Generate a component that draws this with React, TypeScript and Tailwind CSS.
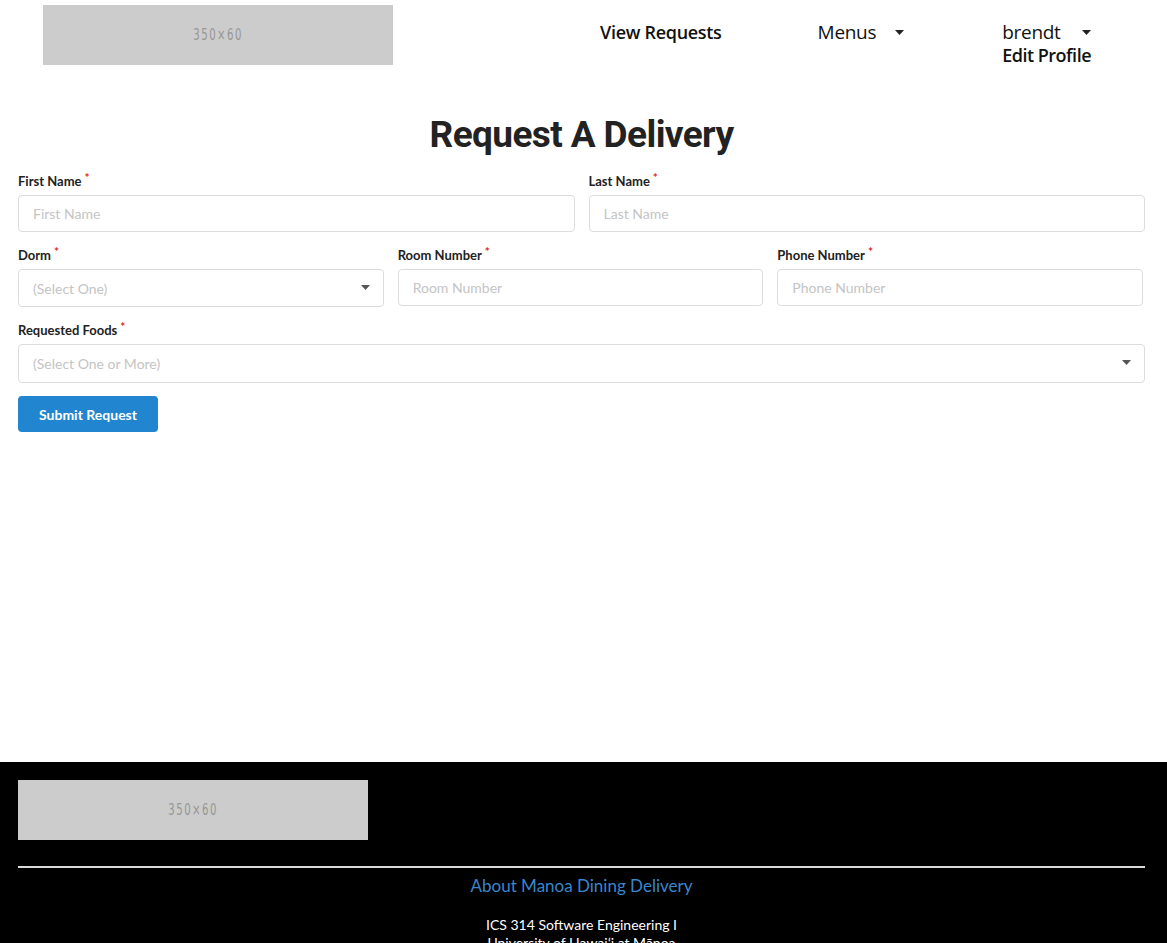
import React from "react";

const Caret = ({ className = "" }: { className?: string }) => (
    <svg width="9" height="5" viewBox="0 0 9 5" className={className}>
        <path d="M0 0 L9 0 L4.5 5 Z" fill="currentColor" />
    </svg>
);

const Placeholder = ({ className = "" }: { className?: string }) => (
    <div className={`bg-[#cccccc] w-[350px] h-[60px] flex items-center justify-center ${className}`}>
        <span className="text-[#969696] text-[15px] tracking-[2px] [font-family:'DejaVu_Sans_Condensed','Liberation_Sans_Narrow',sans-serif] scale-x-75">
            350×60
        </span>
    </div>
);

const Label = ({ children }: { children: React.ReactNode }) => (
    <label className="block text-[13px] font-bold text-[#222] leading-none mb-[7px]">
        {children}
        <span className="text-[#db2828] text-[12px] relative -top-[4px] ml-[3px]">*</span>
    </label>
);

const Input = ({ placeholder }: { placeholder: string }) => (
    <input
        placeholder={placeholder}
        className="w-full h-[37px] px-[14px] border border-[#dcdcdd] rounded-[4px] text-[14px] text-[#222] placeholder:text-[#c4c4c4] outline-none"
    />
);

const Select = ({ placeholder, tall = false }: { placeholder: string; tall?: boolean }) => (
    <div className={`w-full ${tall ? "h-[39px]" : "h-[38px]"} px-[14px] border border-[#dcdcdd] rounded-[4px] flex items-center justify-between`}>
        <span className="text-[14px] text-[#c4c4c4]">{placeholder}</span>
        <Caret className="text-[#555] -mr-[1px] -mt-[2px]" />
    </div>
);

const Header: React.FC = () => (
    <header className="h-[70px] flex items-start pt-[5px] pl-[43px] [font-family:'Open_Sans',sans-serif] text-[#111]">
        <Placeholder />
        <nav className="flex items-start ml-[207px] pt-[16px] text-[19px] leading-[23px]">
            <a className="font-semibold text-[18px] tracking-[-0.3px]">View Requests</a>
            <div className="flex items-center ml-[96px]">
                <span className="tracking-[-0.3px]">Menus</span>
                <Caret className="ml-[19px] text-[#222]" />
            </div>
            <div className="ml-[98px] flex flex-col">
                <div className="flex items-center">
                    <span className="tracking-[-0.3px]">brendt</span>
                    <Caret className="ml-[21px] text-[#222]" />
                </div>
                <a className="font-semibold text-[18px] tracking-[-0.5px]">Edit Profile</a>
            </div>
        </nav>
    </header>
);

export default function App() {
    return (
        <div className="min-h-screen bg-white [font-family:Lato,sans-serif]">
            <Header />
            <main className="h-[692px] px-[18px] pr-[22px] pt-[46px]">
                <h1 className="text-center text-[37px] font-bold text-[#222] leading-none mb-[22px] tracking-[-0.6px] [font-family:'Roboto',sans-serif]">
                    Request A Delivery
                </h1>
                <form className="flex flex-col">
                    <div className="grid grid-cols-2 gap-[14px]">
                        <div>
                            <Label>First Name</Label>
                            <Input placeholder="First Name" />
                        </div>
                        <div>
                            <Label>Last Name</Label>
                            <Input placeholder="Last Name" />
                        </div>
                    </div>
                    <div className="grid grid-cols-3 gap-[14px] mt-[17px] pr-[2px]">
                        <div>
                            <Label>Dorm</Label>
                            <Select placeholder="(Select One)" />
                        </div>
                        <div>
                            <Label>Room Number</Label>
                            <Input placeholder="Room Number" />
                        </div>
                        <div>
                            <Label>Phone Number</Label>
                            <Input placeholder="Phone Number" />
                        </div>
                    </div>
                    <div className="mt-[17px]">
                        <Label>Requested Foods</Label>
                        <Select placeholder="(Select One or More)" tall />
                    </div>
                    <div className="mt-[13px]">
                        <button
                            type="button"
                            className="bg-[#2185d0] text-white font-bold text-[14px] h-[36px] w-[140px] rounded-[4px]"
                        >
                            Submit Request
                        </button>
                    </div>
                </form>
            </main>
            <footer className="bg-black px-[18px] pr-[22px] pt-[18px] pb-[20px]">
                <Placeholder />
                <hr className="mt-[26px] border-0 h-[2px] bg-[#d9d9d9]" />
                <div className="text-center mt-[6px]">
                    <a className="text-[#3a86cc] text-[17px] leading-[22px]">About Manoa Dining Delivery</a>
                    <p className="text-white text-[14px] leading-[18px] mt-[18px]">ICS 314 Software Engineering I</p>
                    <p className="text-white text-[14px] leading-[18px]">University of Hawaiʻi at Mānoa</p>
                </div>
            </footer>
        </div>
    );
}
